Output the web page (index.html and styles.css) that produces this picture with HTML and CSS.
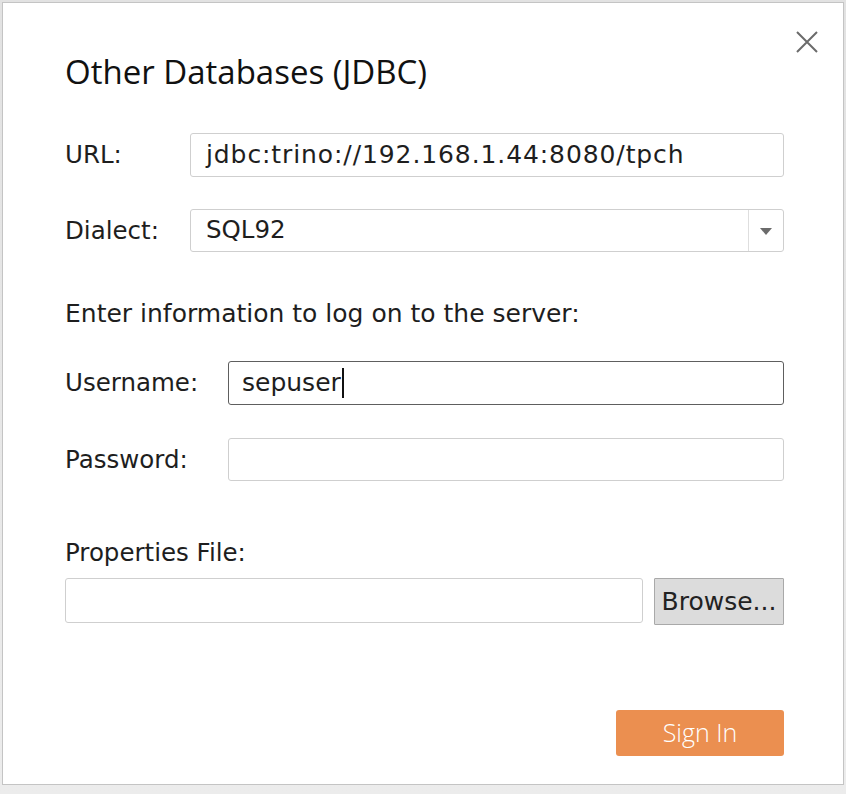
FILE: index.html
```html
<!DOCTYPE html>
<html>
<head>
<meta charset="utf-8">
<link rel="stylesheet" href="styles.css">
</head>
<body>
<div class="dialog">
  <button class="close" aria-label="Close">
    <svg width="24" height="24" viewBox="0 0 24 24"><path d="M2 2 L22 22 M22 2 L2 22" stroke="#6b6b6b" stroke-width="2" fill="none"/></svg>
  </button>
  <h1 class="title">Other Databases (JDBC)</h1>
  <div class="row row-url">
    <label class="label label-wide">URL:</label>
    <div class="field url-field">jdbc:trino://192.168.1.44:8080/tpch</div>
  </div>
  <div class="row row-dialect">
    <label class="label label-wide">Dialect:</label>
    <div class="field select">
      <span class="select-value">SQL92</span>
      <span class="select-arrow"><svg width="12" height="8" viewBox="0 0 12 8"><path d="M0 0 H12 L6 7 Z" fill="#6b6b6b"/></svg></span>
    </div>
  </div>
  <p class="note">Enter information to log on to the server:</p>
  <div class="row row-user">
    <label class="label label-login">Username:</label>
    <div class="field focused"><span class="caret">sepuser</span></div>
  </div>
  <div class="row row-pass">
    <label class="label label-login">Password:</label>
    <div class="field"></div>
  </div>
  <p class="note note-props">Properties File:</p>
  <div class="row row-file">
    <div class="field file-field"></div>
    <button class="browse">Browse...</button>
  </div>
  <div class="actions">
    <button class="signin">Sign In</button>
  </div>
</div>
</body>
</html>
```
FILE: styles.css
```css
* { box-sizing: border-box; }
html, body { margin: 0; padding: 0; }
body {
  width: 846px;
  height: 794px;
  background: linear-gradient(#e2e2e2, #ececec);
  font-family: "DejaVu Sans", "Noto Sans", sans-serif;
  color: #1e1e1e;
  overflow: hidden;
}
.dialog {
  position: relative;
  margin: 2px 0 0 2px;
  width: 842px;
  height: 783px;
  background: #fff;
  border: 1px solid #c4c4c4;
  padding: 54px 59px 0 62px;
}
.close {
  position: absolute;
  top: 24px;
  left: 789px;
  width: 30px;
  height: 30px;
  padding: 3px;
  border: 0;
  background: none;
}
.close svg { display: block; }
.title {
  margin: 0;
  font-family: "Open Sans", sans-serif;
  font-size: 33px;
  line-height: 36px;
  font-weight: 400;
  color: #111;
  margin-top: -3px;
  margin-bottom: -1px;
}
.row {
  display: flex;
  align-items: center;
}
.label {
  font-size: 24.5px;
  line-height: 30px;
  flex: none;
}
.label-wide { width: 125px; }
.label-login { width: 163px; }
.field {
  flex: 1;
  height: 44px;
  border: 1.5px solid #cfcfcf;
  border-radius: 3px;
  padding: 0 0 0 15px;
  font-size: 25px;
  line-height: 41px;
  color: #1e1e1e;
  background: #fff;
  white-space: nowrap;
}
.url-field { letter-spacing: 0.9px; }
.row-url { margin-top: 44px; }
.row-dialect { margin-top: 32px; }
.row-dialect .field { height: 43px; line-height: 40px; }
.select {
  display: flex;
  padding-right: 0;
}
.select-value { flex: 1; font-size: 24.5px; }
.select-arrow {
  width: 35px;
  border-left: 1px solid #dedede;
  display: flex;
  align-items: center;
  justify-content: center;
  padding-top: 2px;
}
.select-arrow svg { display: block; }
.note {
  margin: 47px 0 0;
  font-size: 25px;
  line-height: 30px;
}
.row-user { margin-top: 32px; }
.focused { border-color: #5e5e5e; padding-left: 13px; }
.caret {
  border-right: 2px solid #111;
  padding-right: 1px;
  line-height: 30px;
  display: inline-block;
  vertical-align: middle;
  margin-top: -3px;
}
.row-pass { margin-top: 33px; }
.row-pass .field { height: 43px; }
.note-props { margin-top: 57px; font-size: 24.5px; }
.row-file {
  margin-top: 10px;
  align-items: flex-start;
  gap: 11px;
}
.file-field { height: 45px; }
.browse {
  flex: none;
  width: 130px;
  height: 47px;
  background: #dcdcdc;
  border: 1.5px solid #a9a9a9;
  font-family: inherit;
  font-size: 25px;
  color: #222;
  padding: 0;
  border-radius: 1px;
}
.actions {
  margin-top: 85px;
  display: flex;
  justify-content: flex-end;
}
.signin {
  width: 168px;
  height: 46px;
  background: #eb8f50;
  border: 0;
  border-radius: 3px;
  color: #fff;
  font-family: "Open Sans", sans-serif;
  font-size: 25px;
  font-weight: 300;
  padding: 0 0 3px;
}
```
